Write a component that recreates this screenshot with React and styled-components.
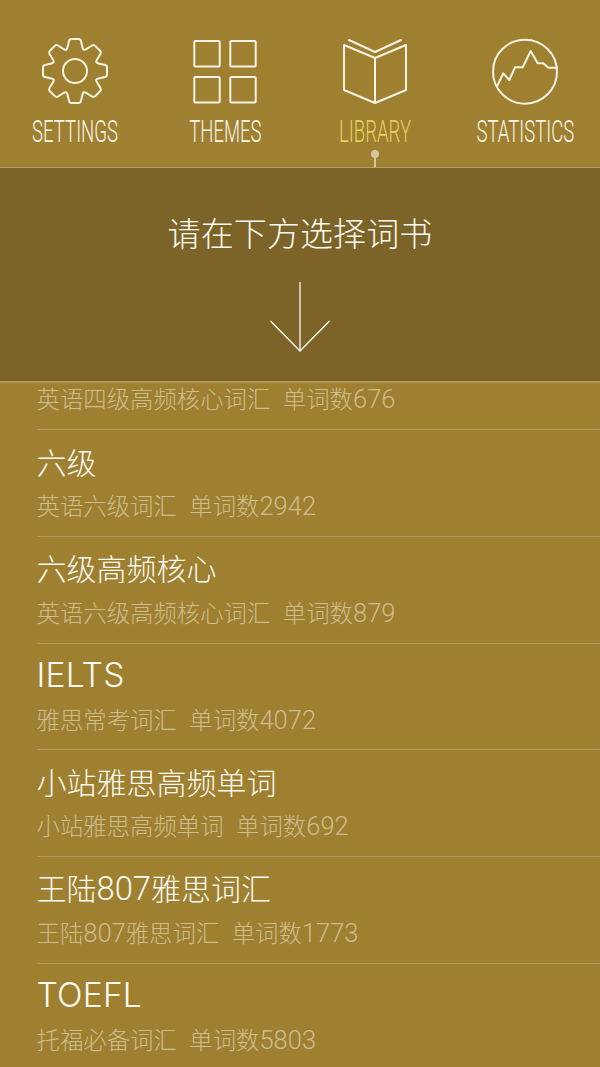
import React from "react";
import styled, { createGlobalStyle } from "styled-components";

const Global = createGlobalStyle`
  html, body { margin: 0; padding: 0; background: #9e8030; }
  #root { width: 600px; height: 1067px; overflow: hidden; }
`;
const Page = styled.div`
  width: 600px; height: 1067px; background: #9e8030; display: flex; flex-direction: column; overflow: hidden;
  font-family: "Noto Sans CJK SC", sans-serif; font-weight: 300;
`;
const Nav = styled.nav`
  height: 167px; flex: none; display: grid; grid-template-columns: repeat(4, 150px);
  border-bottom: 1px solid #b9a265;
`;
const NavItem = styled.div`
  display: flex; flex-direction: column; align-items: center; padding-top: 36px; position: relative;
  color: ${p => (p.$active ? "#e6cf5c" : "#f8f5ea")};
`;
const IconBox = styled.svg`
  width: 70px; height: 70px; display: block; fill: none; stroke: #f6f2e4; stroke-width: 2;
  stroke-linejoin: round; stroke-linecap: round;
`;
const NavLabel = styled.span`
  font-family: "Roboto", sans-serif; font-weight: 300;
  font-size: 32px; line-height: 36px; margin-top: 7px; white-space: nowrap;
  transform: scaleX(.58);
`;
const Pin = styled.span`
  position: absolute; left: 50%; top: 150px; width: 8px; height: 8px; margin-left: -4px; border-radius: 50%;
  background: #d4c89e;
  &::after { content: ""; position: absolute; left: 3px; top: 7px; width: 2px; height: 10px; background: #d4c89e; }
`;
const Prompt = styled.section`
  height: 215px; flex: none; box-sizing: border-box; background: #7c6428; border-bottom: 2px solid #b39a57;
  display: flex; flex-direction: column; align-items: center; color: #fbf9f2;
`;
const PromptTitle = styled.h1`
  margin: 40px 0 0; font-size: 33px; line-height: 48px; font-weight: 300; letter-spacing: .1px;
`;
const Arrow = styled.svg`
  width: 62px; height: 72px; margin-top: 26px; fill: none; stroke: #fbf9f2; stroke-width: 1.3;
`;
const List = styled.ul`
  list-style: none; margin: 0; padding: 0 0 0 37px; flex: 1; overflow: hidden;
`;
const Row = styled.li`
  height: 106.67px; box-sizing: border-box; border-bottom: 1px solid #b09a5e;
  display: flex; flex-direction: column;
  &:first-child { height: 47.3px; }
  &:last-child { border-bottom: none; }
`;
const Title = styled.div`
  font-size: 30px; line-height: 44px; margin: 8.5px 0 0 -0.5px; color: #fbf9f2; font-weight: 300; white-space: pre;
`;
const Sub = styled.div`
  font-size: 23.4px; line-height: 34px; margin: 5.5px 0 0 -0.5px; color: #cdbd8d; font-weight: 300; white-space: pre;
  ${Row}:first-child & { margin-top: 0; line-height: 30px; }
`;
const Digits = styled.span`
  font-family: "Roboto", sans-serif; font-size: 1.09em; line-height: 1;
`;
const Word = styled.span`
  font-family: "Inter", sans-serif; font-size: 1.12em; line-height: 1; font-weight: 300; letter-spacing: .2px;
`;

const mixed = text =>
  text.split(/([A-Z]+|[0-9 ]+)/).filter(Boolean).map((part, i) =>
    /^[A-Z]/.test(part) ? <Word key={i}>{part}</Word> : /^[0-9 ]/.test(part) ? <Digits key={i}>{part}</Digits> : part
  );

const gearPath = (() => {
  const cx = 35, cy = 35, Rt = 32.5, Rr = 23, tip = 5.5, base = 8;
  const pol = (r, a) => [cx + r * Math.sin(a), cy - r * Math.cos(a)];
  const pts = [];
  for (let k = 0; k < 8; k++) {
    const t = (k * Math.PI) / 4;
    const ar = Math.asin(base / Rr), at = Math.asin(tip / Rt);
    pts.push(pol(Rr, t - ar), pol(Rt, t - at), pol(Rt, t + at), pol(Rr, t + ar));
  }
  const n = pts.length, rad = 2;
  let d = "";
  pts.forEach((p, i) => {
    const a = pts[(i + n - 1) % n], b = pts[(i + 1) % n];
    const to = (q) => {
      const dx = q[0] - p[0], dy = q[1] - p[1], l = Math.hypot(dx, dy), r = Math.min(rad, l / 2);
      return [p[0] + (dx / l) * r, p[1] + (dy / l) * r];
    };
    const s = to(a), e = to(b);
    d += `${i ? "L" : "M"}${s[0].toFixed(2)} ${s[1].toFixed(2)}Q${p[0].toFixed(2)} ${p[1].toFixed(2)} ${e[0].toFixed(2)} ${e[1].toFixed(2)}`;
  });
  return d + "Z";
})();

const Gear = () => (
  <IconBox viewBox="0 0 70 70">
    <circle cx="35" cy="35" r="12" />
    <path d={gearPath} />
  </IconBox>
);
const Grid = () => (
  <IconBox viewBox="0 0 70 70">
    <rect x="4.300" y="5" width="25.400" height="25.400" rx="1" />
    <rect x="40.300" y="5" width="25.400" height="25.400" rx="1" />
    <rect x="4.300" y="41" width="25.400" height="25.400" rx="1" />
    <rect x="40.300" y="41" width="25.400" height="25.400" rx="1" />
  </IconBox>
);
const Book = () => (
  <IconBox viewBox="0 0 70 70">
    <path d="M4 9 L35 22 L66 9 V54 L35 67 L4 54 Z M35 22 V67" />
    <path d="M9 4 L35 16 L61 4" />
  </IconBox>
);
const Stats = () => (
  <IconBox viewBox="0 0 70 70">
    <circle cx="35" cy="35.700" r="32" />
    <path d="M7.300 49.700 L13.300 37.300 L19.300 44 L25 31.300 H32.700 L40.700 15 L47.700 27.300 H53.300 L58.300 31.700 H67" />
  </IconBox>
);

const items = [
  { label: "SETTINGS", icon: <Gear /> },
  { label: "THEMES", icon: <Grid /> },
  { label: "LIBRARY", icon: <Book />, active: true },
  { label: "STATISTICS", icon: <Stats /> },
];
const rows = [
  { sub: "英语四级高频核心词汇  单词数676" },
  { title: "六级", sub: "英语六级词汇  单词数2942" },
  { title: "六级高频核心", sub: "英语六级高频核心词汇  单词数879" },
  { title: "IELTS", sub: "雅思常考词汇  单词数4072" },
  { title: "小站雅思高频单词", sub: "小站雅思高频单词  单词数692" },
  { title: "王陆807雅思词汇", sub: "王陆807雅思词汇  单词数1773" },
  { title: "TOEFL", sub: "托福必备词汇  单词数5803" },
];

export default function App() {
  return (
    <Page>
      <Global />
      <Nav>
        {items.map(i => (
          <NavItem key={i.label} $active={i.active}>
            {i.icon}
            <NavLabel>{i.label}</NavLabel>
            {i.active && <Pin />}
          </NavItem>
        ))}
      </Nav>
      <Prompt>
        <PromptTitle>请在下方选择词书</PromptTitle>
        <Arrow viewBox="0 0 62 72">
          <path d="M31 0 V69 M1.500 39 L31 69 L60.500 39" />
        </Arrow>
      </Prompt>
      <List>
        {rows.map(r => (
          <Row key={r.sub}>
            {r.title && <Title>{mixed(r.title)}</Title>}
            <Sub>{mixed(r.sub)}</Sub>
          </Row>
        ))}
      </List>
    </Page>
  );
}
